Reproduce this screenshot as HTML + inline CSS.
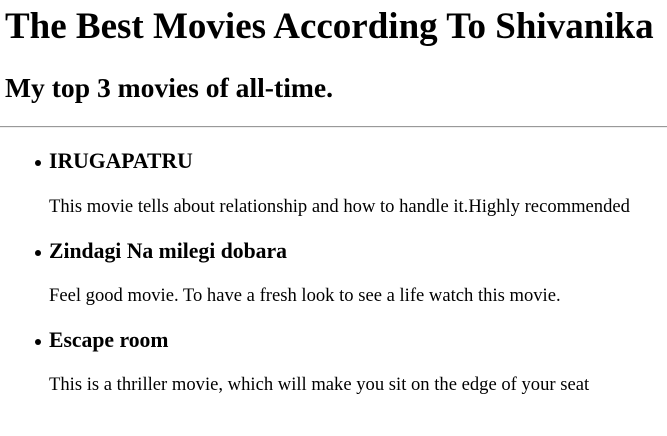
<!DOCTYPE html>
<html><head><meta charset="utf-8"><style>
body{margin:0;width:667px;height:436px;background:#fff;font-family:"Liberation Serif",serif;color:#000;position:relative;overflow:hidden}
.a{position:absolute;white-space:nowrap;margin:0;line-height:1}
h1{font-size:37px;left:5px;top:8px}
h2{font-size:27.6px;left:5px;top:74px}
h3{font-size:21.7px;left:49px}
p{font-size:18.6px;left:49px}
.b{position:absolute;left:35px;width:6px;height:6px;border-radius:50%;background:#000}
hr{position:absolute;left:0;top:126px;width:667px;margin:0;border:0;border-top:1px solid #999;border-bottom:1px solid #eee;height:0}
</style></head><body>
<h1 class="a">The Best Movies According To Shivanika</h1>
<h2 class="a">My top 3 movies of all-time.</h2>
<hr>
<div class="b" style="top:160px"></div><h3 class="a" style="top:151px">IRUGAPATRU</h3>
<p class="a" style="top:198px">This movie tells about relationship and how to handle it.Highly recommended</p>
<div class="b" style="top:250px"></div><h3 class="a" style="top:241px">Zindagi Na milegi dobara</h3>
<p class="a" style="top:287px">Feel good movie. To have a fresh look to see a life watch this movie.</p>
<div class="b" style="top:339px"></div><h3 class="a" style="top:330px">Escape room</h3>
<p class="a" style="top:376px">This is a thriller movie, which will make you sit on the edge of your seat</p>
</body></html>
